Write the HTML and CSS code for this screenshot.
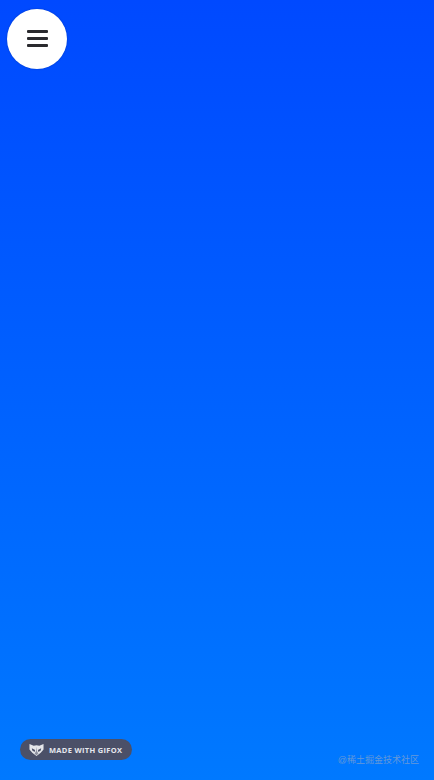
FILE: index.html
```html
<!DOCTYPE html>
<html lang="zh">
<head>
    <meta charset="UTF-8">
    <meta name="viewport" content="width=device-width, initial-scale=1.0">
    <title>Menu</title>
    <link rel="stylesheet" href="styles.css">
</head>
<body>
    <div class="page">
        <button class="menu-button" aria-label="Menu">
            <span class="menu-line"></span>
            <span class="menu-line"></span>
            <span class="menu-line"></span>
        </button>

        <div class="footer">
            <div class="gifox-badge">
                <svg class="gifox-logo" viewBox="0 0 16 14" width="15" height="14">
                    <path d="M0.5 0.5 L5 2.5 L8 2 L11 2.5 L15.5 0.5 L15.5 6.5 L12.5 10 L8 13.5 L3.5 10 L0.5 6.5 Z" fill="#e4e6ea"/>
                    <path d="M3 5 L6.5 7 L6 9 L3.5 7.5 Z M13 5 L9.5 7 L10 9 L12.5 7.5 Z" fill="#4b5068"/>
                    <path d="M8 3.5 L8.5 8 L10 11 L8 12.5 L6 11 L7.5 8 Z" fill="#8d90a0"/>
                </svg>
                <span class="gifox-text">MADE WITH GIFOX</span>
            </div>
            <span class="watermark">@稀土掘金技术社区</span>
        </div>
    </div>
</body>
</html>
```

FILE: styles.css
```css
html, body {
    margin: 0;
    height: 100%;
}
.page {
    box-sizing: border-box;
    height: 780px;
    padding: 9px 15px 14px 7px;
    display: flex;
    flex-direction: column;
    justify-content: space-between;
    background: linear-gradient(180deg, #0049ff 0%, #0079ff 100%);
    font-family: "Liberation Sans", "Noto Sans CJK SC", sans-serif;
    overflow: hidden;
}
.menu-button {
    width: 60px;
    height: 60px;
    padding: 0 0 1px;
    border: none;
    border-radius: 50%;
    background: #fff;
    display: flex;
    flex-direction: column;
    align-items: center;
    justify-content: center;
    gap: 4px;
    box-shadow: 0 0 2px rgba(0,0,0,0.25);
}
.menu-line {
    width: 21px;
    height: 3px;
    border-radius: 1px;
    background: #2a2a2e;
}
.footer {
    display: flex;
    justify-content: space-between;
    align-items: flex-end;
    padding-left: 13px;
}
.gifox-badge {
    width: 112px;
    height: 21px;
    margin-bottom: 6px;
    border-radius: 11px;
    background: #4b5068;
    display: flex;
    align-items: center;
    gap: 5px;
    padding-left: 9px;
    box-sizing: border-box;
}
.gifox-text {
    font-family: "Open Sans", "Liberation Sans", sans-serif;
    font-size: 7.5px;
    font-weight: 700;
    letter-spacing: 0.3px;
    color: #e6e8ee;
    white-space: nowrap;
}
.watermark {
    font-size: 9px;
    line-height: 12px;
    color: rgba(170,175,190,0.6);
    white-space: nowrap;
}
```
